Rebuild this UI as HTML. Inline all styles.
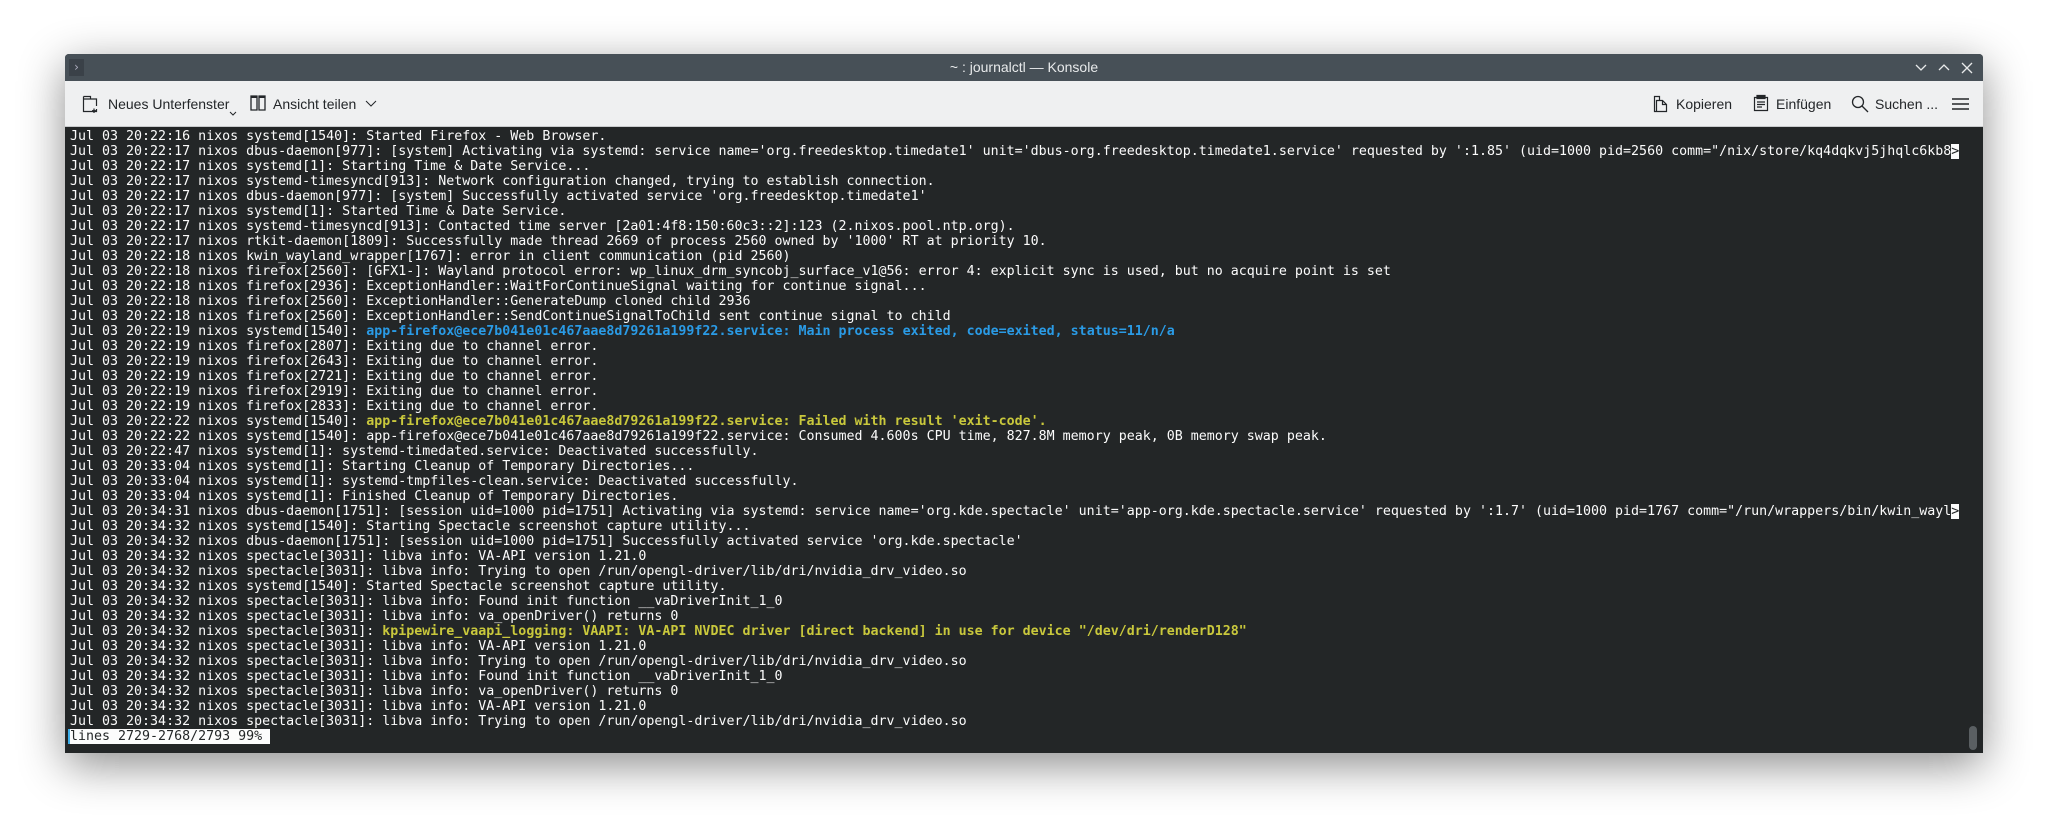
<!DOCTYPE html>
<html><head><meta charset="utf-8"><style>
html,body{margin:0;padding:0;width:2050px;height:832px;background:#fff;overflow:hidden}
.win{position:absolute;left:65px;top:54px;width:1918px;height:699px;background:#232627;box-shadow:0 12px 45px rgba(0,0,0,.45);border-radius:4px 4px 0 0;overflow:hidden}
.title{position:absolute;left:0;top:0;width:100%;height:27px;background:#475057;color:#e8eaeb;font:14px "Liberation Sans",sans-serif;text-align:center;line-height:27px}
.tb{position:absolute;left:0;top:27px;width:100%;height:45px;background:#eff0f1;border-bottom:1px solid #c8cacc;font:14px "Liberation Sans",sans-serif;color:#232629}
.tb span{position:absolute;top:15px}
.term{position:absolute;left:5px;top:75px;width:1909px;font:13.3px "DejaVu Sans Mono",monospace;color:#fcfcfc;white-space:pre;line-height:15px;overflow:hidden}
.b{color:#2a9be6;font-weight:bold}.y{color:#c9c83c;font-weight:bold}
.cur{background:#fcfcfc;color:#232627}
svg{position:absolute}
</style></head><body>
<div class="win">
<div class="title">~ : journalctl — Konsole</div>
<div style="position:absolute;left:4px;top:5px;width:15px;height:17px;background:#3a4148;color:#aab;font:12px 'DejaVu Sans';line-height:17px;text-align:center">›</div>
<svg style="left:1848px;top:7px" width="70" height="14" fill="none" stroke="#e8eaeb" stroke-width="1.3"><path d="M3 4l5 5 5-5M26 9l5-5 5 5M49 2l10 10M59 2l-10 10"/></svg>
<div class="tb">
<svg style="left:17px;top:14px" width="18" height="18" fill="none" stroke="#232629" stroke-width="1.2"><path d="M1.5 1.5h7v2.5h6v7M14.5 14v2.5h-13v-15M1.5 4h7M12 13.5v4.5M10 15.7h4"/></svg>
<span style="left:43px">Neues Unterfenster</span>
<svg style="left:164px;top:30px" width="8" height="6" fill="none" stroke="#232629"><path d="M1 1l3 3 3-3"/></svg>
<svg style="left:185px;top:14px" width="16" height="16" fill="none" stroke="#232629" stroke-width="1.3"><path d="M1 1h6v14H1zM9 1h6v14H9z"/><path d="M1 2h6M9 2h6" stroke-width="2"/></svg>
<span style="left:208px">Ansicht teilen</span>
<svg style="left:300px;top:19px" width="12" height="8" fill="none" stroke="#232629"><path d="M1 1l5 5 5-5"/></svg>
<svg style="left:1588px;top:14px" width="16" height="18" fill="none" stroke="#232629" stroke-width="1.2"><path d="M1.5 1.5h5v4h-3v11h-2zM3.5 5.5h6l4 4v7h-10zM9.5 5.5v4h4"/></svg>
<span style="left:1611px">Kopieren</span>
<svg style="left:1688px;top:13px" width="16" height="18" fill="none" stroke="#232629" stroke-width="1.2"><path d="M1.5 3.5h13v13h-13z"/><path d="M4 1.5h8v3H4z" fill="#232629"/><path d="M4 8h8M4 10.5h8M4 13h5"/></svg>
<span style="left:1711px">Einfügen</span>
<svg style="left:1786px;top:14px" width="18" height="18" fill="none" stroke="#232629" stroke-width="1.3"><circle cx="7" cy="7" r="5.5"/><path d="M11 11l6 6"/></svg>
<span style="left:1810px">Suchen ...</span>
<svg style="left:1887px;top:16px" width="17" height="14" fill="none" stroke="#232629" stroke-width="1.6"><path d="M0 2h17M0 7h17M0 12h17"/></svg>
</div>
<div class="term">Jul 03 20:22:16 nixos systemd[1540]: Started Firefox - Web Browser.
Jul 03 20:22:17 nixos dbus-daemon[977]: [system] Activating via systemd: service name='org.freedesktop.timedate1' unit='dbus-org.freedesktop.timedate1.service' requested by ':1.85' (uid=1000 pid=2560 comm="/nix/store/kq4dqkvj5jhqlc6kb8<span class="cur">&gt;</span>
Jul 03 20:22:17 nixos systemd[1]: Starting Time &amp; Date Service...
Jul 03 20:22:17 nixos systemd-timesyncd[913]: Network configuration changed, trying to establish connection.
Jul 03 20:22:17 nixos dbus-daemon[977]: [system] Successfully activated service 'org.freedesktop.timedate1'
Jul 03 20:22:17 nixos systemd[1]: Started Time &amp; Date Service.
Jul 03 20:22:17 nixos systemd-timesyncd[913]: Contacted time server [2a01:4f8:150:60c3::2]:123 (2.nixos.pool.ntp.org).
Jul 03 20:22:17 nixos rtkit-daemon[1809]: Successfully made thread 2669 of process 2560 owned by '1000' RT at priority 10.
Jul 03 20:22:18 nixos kwin_wayland_wrapper[1767]: error in client communication (pid 2560)
Jul 03 20:22:18 nixos firefox[2560]: [GFX1-]: Wayland protocol error: wp_linux_drm_syncobj_surface_v1@56: error 4: explicit sync is used, but no acquire point is set
Jul 03 20:22:18 nixos firefox[2936]: ExceptionHandler::WaitForContinueSignal waiting for continue signal...
Jul 03 20:22:18 nixos firefox[2560]: ExceptionHandler::GenerateDump cloned child 2936
Jul 03 20:22:18 nixos firefox[2560]: ExceptionHandler::SendContinueSignalToChild sent continue signal to child
Jul 03 20:22:19 nixos systemd[1540]: <span class="b">app-firefox@ece7b041e01c467aae8d79261a199f22.service: Main process exited, code=exited, status=11/n/a</span>
Jul 03 20:22:19 nixos firefox[2807]: Exiting due to channel error.
Jul 03 20:22:19 nixos firefox[2643]: Exiting due to channel error.
Jul 03 20:22:19 nixos firefox[2721]: Exiting due to channel error.
Jul 03 20:22:19 nixos firefox[2919]: Exiting due to channel error.
Jul 03 20:22:19 nixos firefox[2833]: Exiting due to channel error.
Jul 03 20:22:22 nixos systemd[1540]: <span class="y">app-firefox@ece7b041e01c467aae8d79261a199f22.service: Failed with result 'exit-code'.</span>
Jul 03 20:22:22 nixos systemd[1540]: app-firefox@ece7b041e01c467aae8d79261a199f22.service: Consumed 4.600s CPU time, 827.8M memory peak, 0B memory swap peak.
Jul 03 20:22:47 nixos systemd[1]: systemd-timedated.service: Deactivated successfully.
Jul 03 20:33:04 nixos systemd[1]: Starting Cleanup of Temporary Directories...
Jul 03 20:33:04 nixos systemd[1]: systemd-tmpfiles-clean.service: Deactivated successfully.
Jul 03 20:33:04 nixos systemd[1]: Finished Cleanup of Temporary Directories.
Jul 03 20:34:31 nixos dbus-daemon[1751]: [session uid=1000 pid=1751] Activating via systemd: service name='org.kde.spectacle' unit='app-org.kde.spectacle.service' requested by ':1.7' (uid=1000 pid=1767 comm="/run/wrappers/bin/kwin_wayl<span class="cur">&gt;</span>
Jul 03 20:34:32 nixos systemd[1540]: Starting Spectacle screenshot capture utility...
Jul 03 20:34:32 nixos dbus-daemon[1751]: [session uid=1000 pid=1751] Successfully activated service 'org.kde.spectacle'
Jul 03 20:34:32 nixos spectacle[3031]: libva info: VA-API version 1.21.0
Jul 03 20:34:32 nixos spectacle[3031]: libva info: Trying to open /run/opengl-driver/lib/dri/nvidia_drv_video.so
Jul 03 20:34:32 nixos systemd[1540]: Started Spectacle screenshot capture utility.
Jul 03 20:34:32 nixos spectacle[3031]: libva info: Found init function __vaDriverInit_1_0
Jul 03 20:34:32 nixos spectacle[3031]: libva info: va_openDriver() returns 0
Jul 03 20:34:32 nixos spectacle[3031]: <span class="y">kpipewire_vaapi_logging: VAAPI: VA-API NVDEC driver [direct backend] in use for device "/dev/dri/renderD128"</span>
Jul 03 20:34:32 nixos spectacle[3031]: libva info: VA-API version 1.21.0
Jul 03 20:34:32 nixos spectacle[3031]: libva info: Trying to open /run/opengl-driver/lib/dri/nvidia_drv_video.so
Jul 03 20:34:32 nixos spectacle[3031]: libva info: Found init function __vaDriverInit_1_0
Jul 03 20:34:32 nixos spectacle[3031]: libva info: va_openDriver() returns 0
Jul 03 20:34:32 nixos spectacle[3031]: libva info: VA-API version 1.21.0
Jul 03 20:34:32 nixos spectacle[3031]: libva info: Trying to open /run/opengl-driver/lib/dri/nvidia_drv_video.so
<span class="cur">lines 2729-2768/2793 99% </span></div>
<div style="position:absolute;left:3px;top:675px;width:2px;height:15px;background:#3daee9"></div>
<div style="position:absolute;left:1904px;top:672px;width:8px;height:24px;border-radius:4px;background:#5a5f62"></div>
</div>
</body></html>
